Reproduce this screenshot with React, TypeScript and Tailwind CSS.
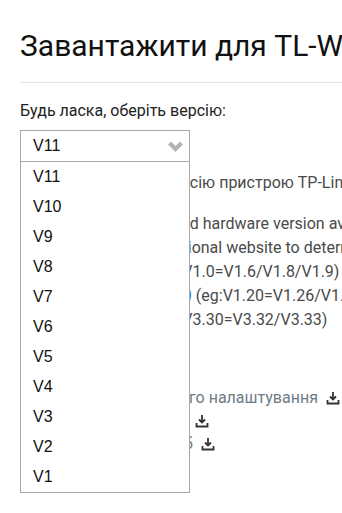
import React from 'react';

const versions = ['V11', 'V10', 'V9', 'V8', 'V7', 'V6', 'V5', 'V4', 'V3', 'V2', 'V1'];

function DownloadIcon() {
  return (
    <svg width="14" height="14" viewBox="0 0 14 14" className="inline-block shrink-0">
      <path d="M7 1v7M4 5.5l3 3 3-3" fill="none" stroke="#333" strokeWidth="1.8" />
      <path d="M1.5 9v3.5h11V9" fill="none" stroke="#333" strokeWidth="1.8" />
    </svg>
  );
}

function VersionSelect() {
  return (
    <div className="relative w-[170px] h-[32px] mt-[7px] z-10">
      <div className="flex items-center justify-between h-full border border-[#a9a9a9] bg-white pl-[12px] pr-[5px] text-[16px] text-[#111] font-['Liberation_Sans',Arial,sans-serif]">
        <span>V11</span>
        <svg width="17" height="12" viewBox="0 0 17 12">
          <path d="M2.5 3l6 6 6-6" fill="none" stroke="#b4b4b4" strokeWidth="4.2" />
        </svg>
      </div>
      <ul className="absolute left-0 top-[31px] w-[170px] border border-[#a9a9a9] bg-white font-['Liberation_Sans',Arial,sans-serif] text-[16px] text-[#111]">
        {versions.map((v) => (
          <li key={v} className="h-[30px] flex items-center pl-[12px]">
            {v}
          </li>
        ))}
      </ul>
    </div>
  );
}

export default function App() {
  return (
    <div className="w-[342px] h-[513px] overflow-hidden bg-white font-['Roboto',Arial,sans-serif]">
      <div className="pl-5 pt-[28px]">
        <h1 className="text-[30px] leading-[36px] text-[#111] whitespace-nowrap">Завантажити для TL-WR840N</h1>
        <div className="mt-[18px] h-px bg-[#e2e2e2]" />
        <p className="mt-[16px] text-[16px] leading-6 text-[#222]">Будь ласка, оберіть версію:</p>
        <VersionSelect />

        <div className="text-[16px] leading-6 text-[#4a4a4a] whitespace-nowrap">
          <p className="mt-[9px]">Знайдіть апаратну версію пристрою TP-Link</p>
          <div className="mt-[17px]">
            <p>Please notice: model and hardware version availability varies by region.</p>
            <p>Please, refer to your regional website to determine product availability.</p>
            <p>Наприклад, як V1 (eg:V1.0=V1.6/V1.8/V1.9)</p>
            <p>
              Наприклад, і для <span className="text-[#2a7fd4]">V1.20</span> (eg:V1.20=V1.26/V1.28)
            </p>
            <p>Наприклад, як V3 (eg:V3.30=V3.32/V3.33)</p>
          </div>
        </div>

        <div className="mt-[54px] text-[16px] text-[#6f7b86] whitespace-nowrap">
          <div className="h-[23px] flex items-center gap-2">
            <span>Керівництво з швидкого налаштування</span>
            <DownloadIcon />
          </div>
          <div className="h-[23px] flex items-center gap-2">
            <span>Посібник користувача</span>
            <DownloadIcon />
          </div>
          <div className="h-[23px] flex items-center gap-2">
            <span>Гарантійний лист, 1 Мб</span>
            <DownloadIcon />
          </div>
        </div>
      </div>
    </div>
  );
}
